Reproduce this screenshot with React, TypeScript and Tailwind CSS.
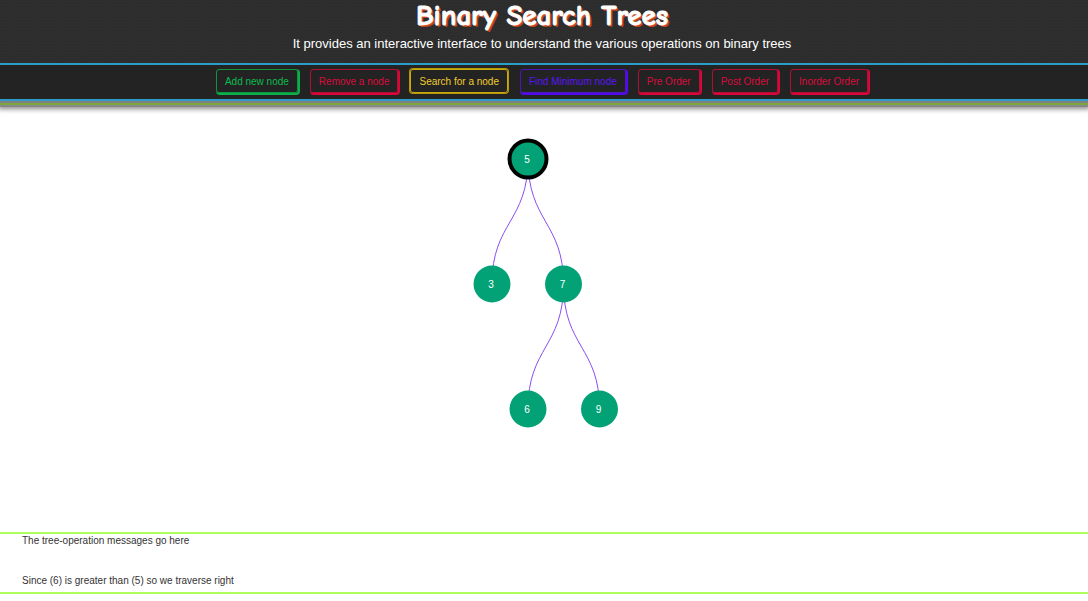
import React from "react";
import clsx from "clsx";

type Tone = "green" | "red" | "yellow" | "indigo";

const tones: Record<Tone, string> = {
  green: "border-[#0d9540] text-[#0dbb4e] shadow-[1px_1px_0_1px_#0bb04a]",
  red: "border-[#ac1238] text-[#d80d3e] shadow-[1px_1px_0_1px_#dc0538]",
  yellow: "border-[#c9a80c] text-[#f0cc30] shadow-[0_0_0_1px_#b89808]",
  indigo: "border-[#4a18b4] text-[#5a14f5] shadow-[1px_1px_0_1px_#520af5]",
};

const actions: { label: string; tone: Tone }[] = [
  { label: "Add new node", tone: "green" },
  { label: "Remove a node", tone: "red" },
  { label: "Search for a node", tone: "yellow" },
  { label: "Find Minimum node", tone: "indigo" },
  { label: "Pre Order", tone: "red" },
  { label: "Post Order", tone: "red" },
  { label: "Inorder Order", tone: "red" },
];

const nodes = [
  { value: 5, x: 150, y: 49, active: true },
  { value: 3, x: 114, y: 174, active: false },
  { value: 7, x: 185.5, y: 174, active: false },
  { value: 6, x: 150, y: 299, active: false },
  { value: 9, x: 221.5, y: 299, active: false },
];

const edges = [
  "M150 49 C150 112 114 112 114 174",
  "M150 49 C150 112 185.5 112 185.5 174",
  "M185.5 174 C185.5 237 150 237 150 299",
  "M185.5 174 C185.5 237 221.5 237 221.5 299",
];

function Tree() {
  return (
    <svg width="300" height="340" viewBox="0 0 300 340" role="img" aria-label="Binary search tree">
      {edges.map((d) => (
        <path key={d} d={d} fill="none" stroke="#8a4df0" strokeWidth="1" />
      ))}
      {nodes.map((n) => (
        <g key={n.value}>
          <circle cx={n.x} cy={n.y} r="18.5" fill="#03a276" stroke={n.active ? "#000" : "none"} strokeWidth="4" />
          <text x={n.x - 1} y={n.y + 4} textAnchor="middle" fontSize="10" fill="#fff">
            {n.value}
          </text>
        </g>
      ))}
    </svg>
  );
}

export default function App() {
  return (
    <div className="flex min-h-screen flex-col bg-white font-['Liberation_Sans',Arial,sans-serif]">
      <header className="bg-[#2d2d2d] bg-[radial-gradient(#313131_1px,transparent_1px)] bg-[size:3px_3px] text-center text-white shadow-[0_2px_0_#808080,0_4px_0_#7aa83c,0_6px_0_#888,0_6px_5px_2px_#888]">
        <h1 className="pr-1 text-[29px] leading-8 font-bold [font-family:'Comic_Sans_MS','Comic_Neue','Chilanka',cursive] [-webkit-text-stroke:1px_#fff] [text-shadow:1px_1px_0_#e2552c,2px_2px_0_#b8431f]">
          Binary Search Trees
        </h1>
        <p className="pt-0.5 pr-1 pb-2.5 text-[13px] leading-[19px]">
          It provides an interactive interface to understand the various operations on binary trees
        </p>
        <nav className="flex flex-wrap justify-center gap-3 border-y-2 border-[#2b9dcb] bg-[#232323] pt-1 pr-1 pb-1.5">
          {actions.map((a) => (
            <button
              key={a.label}
              type="button"
              className={clsx("h-6 rounded-[3px] border px-2 text-[10px]", tones[a.tone])}
            >
              {a.label}
            </button>
          ))}
        </nav>
      </header>
      <main className="flex grow justify-center overflow-hidden pt-[9px] pr-[33px]">
        <Tree />
      </main>
      <section aria-live="polite" className="mb-[7px] border-y-2 border-[#adff5c] px-[22px] pb-1 text-[10px] leading-[14px] text-[#333]">
        <p>The tree-operation messages go here</p>
        <p className="pt-[26px]">Since (6) is greater than (5) so we traverse right</p>
      </section>
    </div>
  );
}
